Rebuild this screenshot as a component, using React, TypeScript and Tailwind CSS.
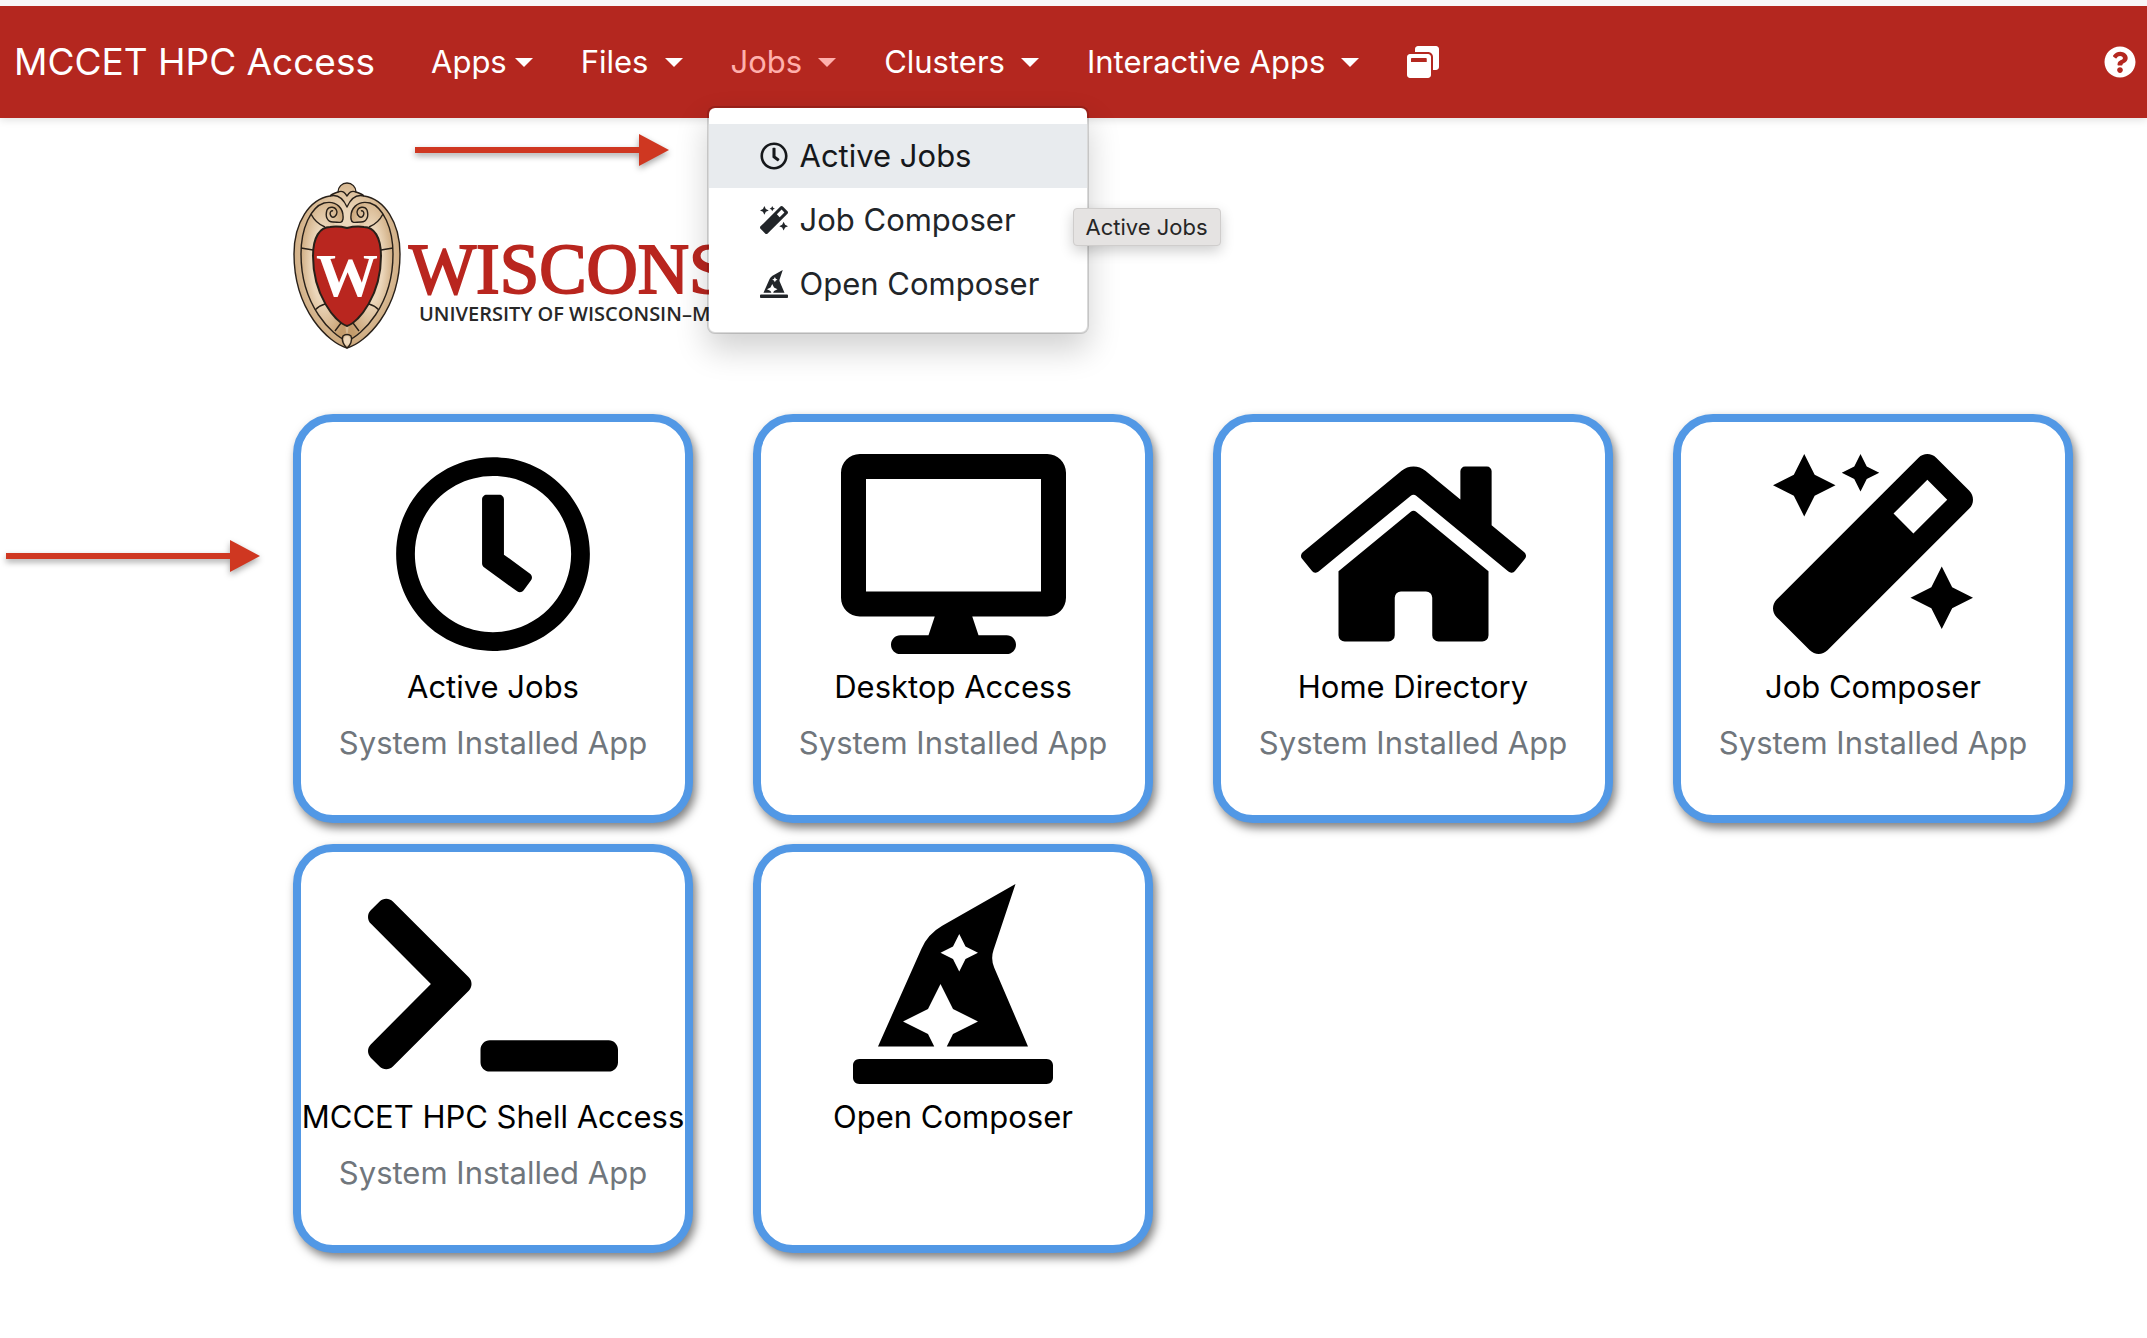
import React from "react";
import {
  FaDesktop,
  FaHatWizard,
  FaHome,
  FaMagic,
  FaQuestionCircle,
  FaRegClock,
  FaTerminal,
  FaWindowRestore,
} from "react-icons/fa";
import type { IconType } from "react-icons";

type AppCard = { title: string; note?: string; icon: IconType; iconWidth: string };

const installed = "System Installed App";

const apps: AppCard[] = [
  { title: "Active Jobs", note: installed, icon: FaRegClock, iconWidth: "w-[200px]" },
  { title: "Desktop Access", note: installed, icon: FaDesktop, iconWidth: "w-[225px]" },
  { title: "Home Directory", note: installed, icon: FaHome, iconWidth: "w-[225px]" },
  { title: "Job Composer", note: installed, icon: FaMagic, iconWidth: "w-[200px]" },
  { title: "MCCET HPC Shell Access", note: installed, icon: FaTerminal, iconWidth: "w-[250px]" },
  { title: "Open Composer", icon: FaHatWizard, iconWidth: "w-[200px]" },
];

const jobsMenu: { label: string; icon: IconType; active?: boolean }[] = [
  { label: "Active Jobs", icon: FaRegClock, active: true },
  { label: "Job Composer", icon: FaMagic },
  { label: "Open Composer", icon: FaHatWizard },
];

function Caret() {
  return (
    <svg viewBox="0 0 18 9" className="h-[9px] w-[18px]" fill="currentColor" aria-hidden="true">
      <path d="M0 0h18L9 9z" />
    </svg>
  );
}

function NavItem({
  label,
  tight,
  open,
  children,
}: {
  label: string;
  tight?: boolean;
  open?: boolean;
  children?: React.ReactNode;
}) {
  return (
    <li className="relative">
      <button
        type="button"
        aria-haspopup="menu"
        aria-expanded={!!open}
        className={`flex items-center px-6 leading-[50px] whitespace-nowrap ${tight ? "gap-2" : "gap-4"} ${
          open ? "text-[#ffb0ac]" : "text-white"
        }`}
      >
        {label}
        <Caret />
      </button>
      {children}
    </li>
  );
}

function JobsMenu() {
  return (
    <div className="absolute top-[69px] left-0 z-20 w-[382px] rounded-lg border-2 border-black/15 bg-white bg-clip-padding py-4 shadow-[0_16px_32px_rgba(0,0,0,0.18)]">
      <ul role="menu">
        {jobsMenu.map(({ label, icon: Icon, active }) => (
          <li key={label} role="none">
            <a
              href="#"
              role="menuitem"
              className={`flex h-16 items-center gap-3 pl-[51px] ${
                active ? "bg-[#e8ebee] text-[#16181b]" : "text-[#212529]"
              }`}
            >
              <Icon className="size-7 shrink-0" />
              {label}
            </a>
          </li>
        ))}
      </ul>
      <div
        role="tooltip"
        className="absolute top-[100px] left-[364px] flex h-[38px] items-center rounded-sm border border-[#cfcdcc] bg-[#e5e3e2] px-3 text-[22px] whitespace-nowrap text-[#262626] shadow-[0_5px_14px_rgba(0,0,0,0.2)]"
      >
        Active Jobs
      </div>
    </div>
  );
}

function Crest() {
  return (
    <svg viewBox="0 0 108 168" className="h-[168px] w-[108px] shrink-0" aria-hidden="true">
      <defs>
        <radialGradient id="stone" cx="50%" cy="45%" r="60%">
          <stop offset="0.45" stopColor="#ecd7bb" />
          <stop offset="1" stopColor="#c49c6c" />
        </radialGradient>
      </defs>
      <g fill="url(#stone)" stroke="#282019" strokeWidth="1.4" strokeLinejoin="round">
        <path d="M54 166C36 161 1 129 1 72C1 40 17 17 37 14C39 12 42 11 45 10C45 5 49 1 54 1C59 1 63 5 63 10C66 11 69 12 71 14C91 17 107 40 107 72C107 129 72 161 54 166Z" />
        <path d="M54 159C39 153 8 124 8 72C8 46 18 25 31 21C44 18 51 27 50 37C49 42 46 40 40 40C34 40 32 34 34 28C36 24 43 24 44 30C44 34 40 37 38 34C36 31 38 28 40 29" />
        <path d="M54 159C69 153 100 124 100 72C100 46 90 25 77 21C64 18 57 27 58 37C59 42 62 40 68 40C74 40 76 34 74 28C72 24 65 24 64 30C64 34 68 37 70 34C72 31 70 28 68 29" />
        <path
          d="M37 14C44 12 50 16 54 25C58 16 64 12 71 14M45 10C50 8 52 11 54 14C56 11 58 8 63 10M18 32C22 40 27 43 32 45M90 32C86 40 81 43 76 45M8 66L20 68M100 66L88 68M22 128C26 124 28 123 32 122M86 128C82 124 80 123 76 122M42 149L48 141M66 149L60 141"
          fill="none"
        />
        <path d="M50 154C52 152 56 152 58 154C60 158 57 164 54 166C51 164 48 158 50 154Z" />
      </g>
      <path
        d="M54 144C42 140 20 113 20 74C20 55 27 45 37 45C44 44 50 45 54 46C58 45 64 44 71 45C81 45 88 55 88 74C88 113 66 140 54 144Z"
        fill="#b9261f"
        stroke="#282019"
        strokeWidth="2"
      />
      <text
        x="54"
        y="114"
        textAnchor="middle"
        fill="#fff"
        fontFamily="'Liberation Serif', serif"
        fontWeight="700"
        fontSize="62"
      >
        W
      </text>
    </svg>
  );
}

function Logo() {
  return (
    <div className="flex h-[168px] items-start pl-[30px]">
      <Crest />
      <div className="pt-[54px] pl-2">
        <div className="font-['Liberation_Serif',serif] text-[71px] leading-[66px] text-[#b9261f] [-webkit-text-stroke:2px_#b9261f]">
          WISCONSIN
        </div>
        <div className="pl-[10px] font-['Open_Sans',sans-serif] text-[20px] leading-6 font-semibold whitespace-nowrap text-[#282828]">
          UNIVERSITY OF WISCONSIN–MADISON
        </div>
      </div>
    </div>
  );
}

function Arrow({ className }: { className: string }) {
  return (
    <svg
      viewBox="0 0 254 32"
      className={`absolute h-8 w-[254px] drop-shadow-[0_3px_3px_rgba(0,0,0,0.35)] ${className}`}
      fill="#cf3721"
      aria-hidden="true"
    >
      <path d="M0 13H224V0L254 16L224 32V19H0Z" />
    </svg>
  );
}

export default function App() {
  return (
    <div className="relative min-h-screen overflow-x-hidden bg-white pb-16 font-[Inter,sans-serif] text-[31px]">
      <header className="relative z-10 border-t-[6px] border-[#f8f6f7] bg-[#b4271f] shadow-[0_2px_8px_rgba(0,0,0,0.12)]">
        <nav className="flex h-28 items-center pr-[11px] pl-[14px]">
          <a href="#" className="mr-8 text-[37px] leading-[60px] whitespace-nowrap text-white">
            MCCET HPC Access
          </a>
          <ul className="flex items-center">
            <NavItem label="Apps" tight />
            <NavItem label="Files" />
            <NavItem label="Jobs" open>
              <JobsMenu />
            </NavItem>
            <NavItem label="Clusters" />
            <NavItem label="Interactive Apps" />
            <li>
              <a href="#" aria-label="My interactive sessions" className="block px-6 text-white">
                <FaWindowRestore className="size-8" />
              </a>
            </li>
          </ul>
          <a href="#" aria-label="Help" className="ml-auto text-white">
            <FaQuestionCircle className="size-8" />
          </a>
        </nav>
      </header>

      <main className="pt-16 pr-11 pl-[263px]">
        <Logo />
        <div className="mt-16 grid grid-cols-4 gap-y-[21px]">
          {apps.map(({ title, note, icon: Icon, iconWidth }) => (
            <a
              key={title}
              href="#"
              className="mx-[30px] flex h-[409px] flex-col items-center rounded-[40px] border-8 border-[#5298e5] bg-white pt-8 shadow-[3px_5px_10px_rgba(0,0,0,0.5)]"
            >
              <Icon className={`h-[200px] text-black ${iconWidth}`} />
              <span className="mt-2 leading-[50px] whitespace-nowrap text-black">{title}</span>
              {note && <span className="mt-[6px] leading-[50px] whitespace-nowrap text-[#70767c]">{note}</span>}
            </a>
          ))}
        </div>
      </main>

      <Arrow className="top-[134px] left-[415px]" />
      <Arrow className="top-[540px] left-[6px]" />
    </div>
  );
}
